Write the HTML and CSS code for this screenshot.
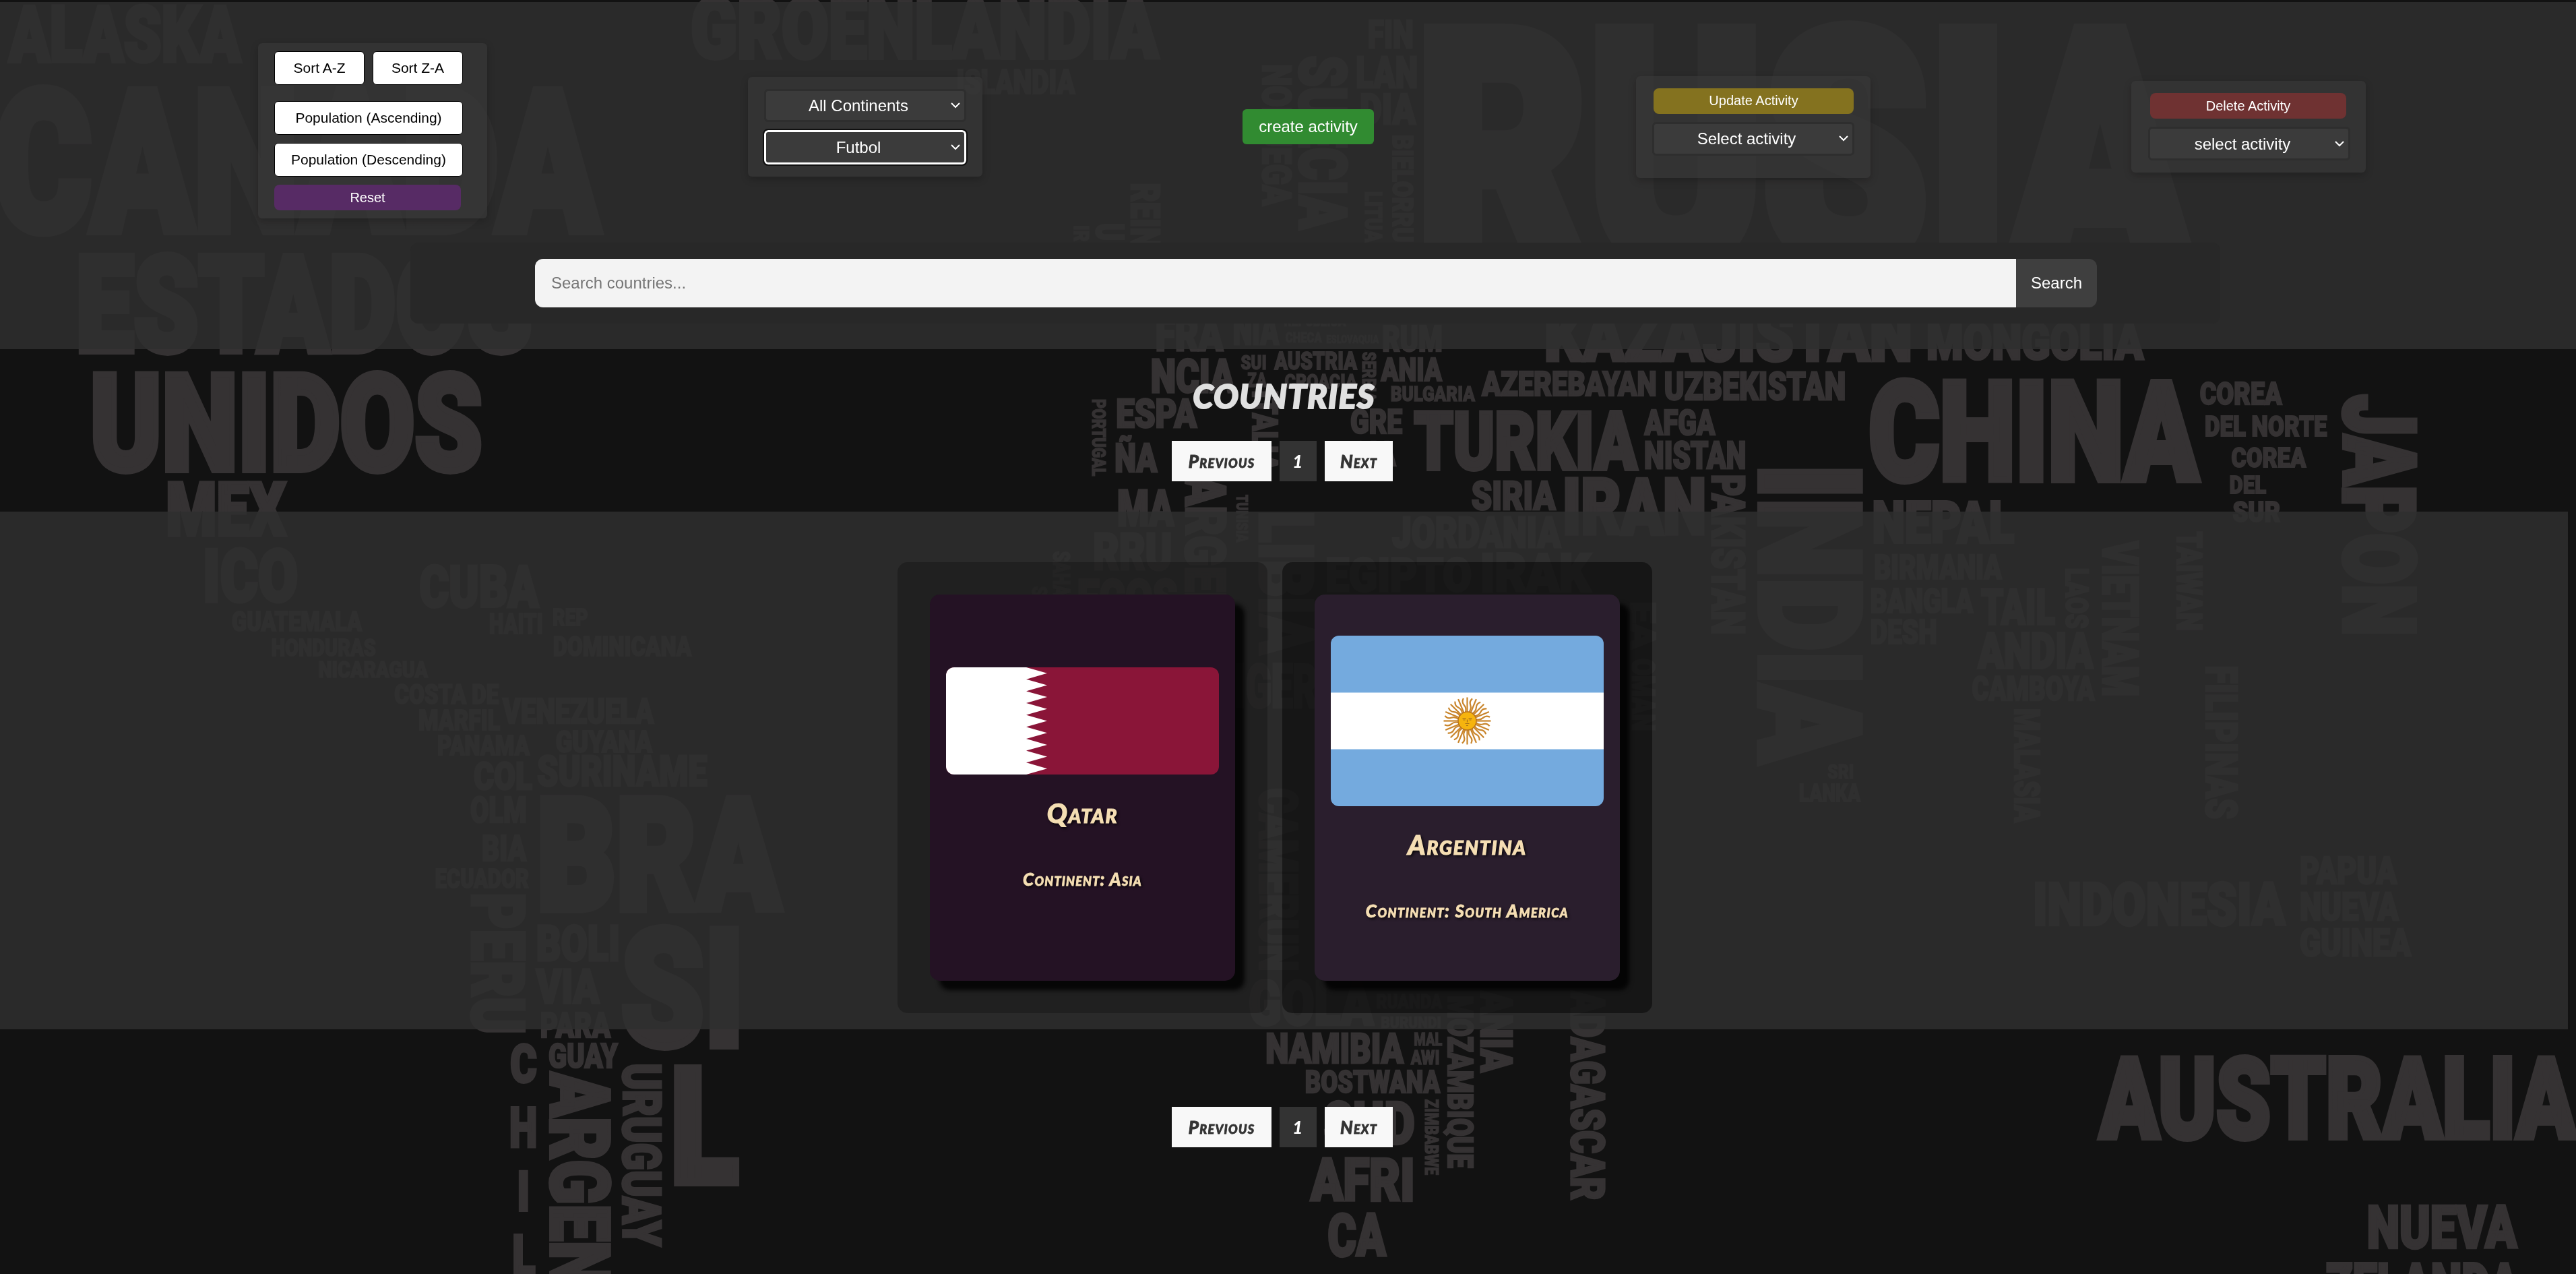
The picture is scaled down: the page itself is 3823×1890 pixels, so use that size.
FILE: index.html
```
<!DOCTYPE html>
<html lang="en">
<head>
<meta charset="utf-8">
<title>Countries</title>
<link rel="stylesheet" href="styles.css">
</head>
<body>
<svg class="world" viewBox="0 0 1568 775.2" preserveAspectRatio="none" aria-hidden="true"></svg>

<header class="header">
  <nav class="controls">
    <div class="panel panel-sort">
      <div class="sort-row">
        <button class="btn-white">Sort A-Z</button>
        <button class="btn-white">Sort Z-A</button>
      </div>
      <button class="btn-white">Population (Ascending)</button>
      <button class="btn-white">Population (Descending)</button>
      <button class="btn-color btn-reset">Reset</button>
    </div>
    <div class="panel panel-filter">
      <select class="select"><option>All Continents</option></select>
      <select class="select select-active"><option>Futbol</option></select>
    </div>
    <button class="btn-create">create activity</button>
    <div class="panel panel-update">
      <button class="btn-color btn-update">Update Activity</button>
      <select class="select"><option>Select activity</option></select>
    </div>
    <div class="panel panel-delete">
      <button class="btn-color btn-delete">Delete Activity</button>
      <select class="select"><option>select activity</option></select>
    </div>
  </nav>
  <form class="search">
    <input class="search-input" type="text" placeholder="Search countries...">
    <button class="search-btn" type="button">Search</button>
  </form>
</header>

<main>
  <div class="intro">
    <h1 class="title">COUNTRIES</h1>
    <div class="pagination">
      <button class="page-btn page-prev">Previous</button>
      <span class="page-now">1</span>
      <button class="page-btn page-next">Next</button>
    </div>
  </div>

  <section class="cards">
    <div class="slot slot-first">
      <article class="card card-qatar">
        <svg class="flag" width="405" height="169" viewBox="0 0 405 169" preserveAspectRatio="none">
          <rect width="405" height="169" fill="#8a1538"/>
          <path fill="#fff" d="M0 0H119L150 9.4 119 18.8 150 28.2 119 37.6 150 46.9 119 56.3 150 65.7 119 75.1 150 84.5 119 93.9 150 103.3 119 112.7 150 122.1 119 131.4 150 140.8 119 150.2 150 159.6 119 169H0Z"/>
        </svg>
        <h2 class="name">Qatar</h2>
        <h3 class="continent">Continent: Asia</h3>
      </article>
    </div>
    <div class="slot slot-second">
      <article class="card card-argentina">
        <svg class="flag" width="405" height="253" viewBox="0 0 405 253">
          <rect width="405" height="253" fill="#74aade"/>
          <rect y="84.500" width="405" height="84" fill="#fff"/>
          <g transform="translate(202.5 126.5)">
            <g id="rays" stroke="#c9852b" stroke-width="2.200" fill="none"></g>
            <circle r="13.500" fill="#f6b40e" stroke="#b8731a" stroke-width="1.500"/>
            <path d="M-7 -3q3-2 5 0M2 -3q3-2 5 0M-6 -1.500h3M3 -1.500h3M0 -2v4M-3 4h6M-1.500 7h3" fill="none" stroke="#a5701a" stroke-width="1.200"/>
          </g>
        </svg>
        <h2 class="name">Argentina</h2>
        <h3 class="continent continent-long">Continent: South America</h3>
      </article>
    </div>
  </section>

  <div class="pagination pagination-bottom">
    <button class="page-btn page-prev">Previous</button>
    <span class="page-now">1</span>
    <button class="page-btn page-next">Next</button>
  </div>
</main>
<script src="script.js"></script>
</body>
</html>
```
FILE: styles.css
```
* { box-sizing: border-box; }
html { background: #121212; }
body {
  margin: 0;
  padding-top: 3px;
  height: 1890px;
  overflow: hidden;
  font-family: "Liberation Sans", Arial, sans-serif;
}
button, input, select { font-family: inherit; margin: 0; }

.world {
  position: fixed;
  inset: 0;
  width: 100%;
  height: 100%;
  z-index: -1;
}
.world text {
  font-family: Roboto, sans-serif;
  font-weight: 900;
  fill: #353233;
  stroke: #353233;
}

.header {
  height: 515px;
  background: rgba(46, 46, 46, 0.86);
}
.controls {
  display: flex;
  align-items: center;
  gap: 387px;
  height: 357px;
  padding: 13px 0 0 383px;
}
.panel {
  display: flex;
  flex-direction: column;
  flex: none;
  align-items: flex-start;
  background: rgba(60, 60, 60, 0.5);
  border-radius: 6px;
  box-shadow: 0 4px 12px rgba(0, 0, 0, 0.22);
}
.panel-sort { width: 340px; height: 260px; padding: 12px 24px; gap: 12px; margin-top: 12px; }
.panel-filter { width: 348px; height: 148px; padding: 18px 24px; gap: 12px; }
.panel-update { width: 348px; height: 151px; padding: 18px 24px; gap: 12px; }
.panel-delete { width: 348px; height: 136px; padding: 18px 25px; gap: 12px; }

.sort-row { display: flex; gap: 12px; margin-bottom: 12px; }
.btn-white {
  width: 280px;
  height: 50px;
  padding: 0;
  font-size: 21px;
  color: #000;
  background: #fff;
  border: 1px solid #000;
  border-radius: 6px;
}
.sort-row .btn-white { width: 134px; }
.btn-color {
  height: 38px;
  padding: 0;
  border: 0;
  border-radius: 8px;
  font-size: 20px;
  color: #fff;
}
.btn-reset { width: 277px; background: rgba(94, 42, 111, 0.85); }
.btn-update { width: 297px; margin-left: 2px; background: rgba(145, 125, 28, 0.86); }
.btn-delete { width: 291px; margin-left: 3px; background: rgba(120, 50, 50, 0.88); }
.select {
  appearance: none;
  width: 300px;
  height: 50px;
  padding: 0 20px 0 0;
  font-size: 24px;
  color: #fff;
  text-align: center;
  text-align-last: center;
  background: #3b3b3b url("data:image/svg+xml,%3Csvg xmlns='http://www.w3.org/2000/svg' width='14' height='9' viewBox='0 0 14 9'%3E%3Cpath d='M1 1l6 6 6-6' fill='none' stroke='white' stroke-width='2'/%3E%3C/svg%3E") no-repeat right 6px center;
  border: 3px solid #2e2e2e;
  border-radius: 6px;
}
.select-active {
  border-color: #fff;
  outline: 2px solid #101010;
  height: 52px;
}
.btn-create {
  flex: none;
  width: 195px;
  height: 52px;
  margin: 0 2px 0 -1px;
  padding: 0;
  border: 0;
  border-radius: 6px;
  font-size: 24px;
  color: #fff;
  background: rgba(50, 150, 50, 0.9);
}

.search {
  display: flex;
  width: 2686px;
  height: 120px;
  margin: 0 0 0 609px;
  padding: 24px 183px 24px 185px;
  background: #282828;
  border-radius: 12px;
}
.search-input {
  flex: 1;
  height: 72px;
  padding: 0 24px;
  border: 0;
  font-size: 24px;
  background: #f3f3f3;
  border-radius: 12px 0 0 12px;
}
.search-input::placeholder { color: #757575; }
.search-btn {
  width: 120px;
  height: 72px;
  padding: 0;
  border: 0;
  font-size: 24px;
  color: #fff;
  background: #3f3f3f;
  border-radius: 0 12px 12px 0;
}

.intro { height: 241px; padding-top: 38px; }
.title {
  margin: 0;
  height: 98px;
  padding-right: 12px;
  text-align: center;
  font: italic 900 49px/62px Lato, sans-serif;
  letter-spacing: 1.3px;
  color: #e0e0e0;
  -webkit-text-stroke: 2px #e0e0e0;
}
.pagination {
  display: flex;
  gap: 12px;
  padding-left: 1739px;
  font: italic 900 26px/60px Lato, sans-serif;
  font-variant: small-caps;
  letter-spacing: 1.3px;
}
.pagination-bottom { margin-top: 115px; }
.page-btn {
  height: 60px;
  padding: 0;
  border: 0;
  font: inherit;
  letter-spacing: inherit;
  color: #333;
  background: #f8f8f8;
  -webkit-text-stroke: 0.8px #333;
}
.page-prev { width: 148px; }
.page-next { width: 101px; }
.page-now {
  width: 55px;
  text-align: center;
  color: #fff;
  background: #333;
}

.cards {
  display: flex;
  gap: 22px;
  width: 3811px;
  height: 768px;
  padding: 75px 0 0 1332px;
  background: rgba(46, 46, 46, 0.86);
}
.slot {
  width: 549px;
  height: 669px;
  padding: 48px;
  border-radius: 15px;
}
.slot-first { background: rgba(0, 0, 0, 0.24); }
.slot-second { background: rgba(0, 0, 0, 0.46); }
.card {
  display: flex;
  flex-direction: column;
  align-items: center;
  width: 453px;
  height: 573px;
  border-radius: 15px;
  box-shadow: 14px 14px 6px rgba(0, 0, 0, 0.8);
  color: #f5deb3;
  text-shadow: 2px 2px 4px #000;
}
.card-qatar { padding-top: 108px; background: #241224; }
.card-argentina { padding-top: 61px; background: #2a1e2d; }
.card-qatar .flag { height: 159px; }
.flag { display: block; flex: none; border-radius: 12px; }
.name {
  margin: 33px 0 0;
  font: italic 900 40px/48px Lato, sans-serif;
  font-variant: small-caps;
  letter-spacing: 1.9px;
  -webkit-text-stroke: 1.2px #f5deb3;
}
.continent {
  margin: 56px 0 0;
  font: italic 900 26px/36px Lato, sans-serif;
  font-variant: small-caps;
  letter-spacing: 1.2px;
  -webkit-text-stroke: 0.8px #f5deb3;
}
.continent-long { letter-spacing: 1.5px; }
```
FILE: script.js
```
// Word map: [text, left, top, right, bottom] for horizontal words.
var across = [
["ALASKA",5.4,2.4,146.5,38.4],["CANADA",-4,52.5,364.5,143.1],["ESTADOS",46,154,324,215.7],
["UNIDOS",54.8,226,293.6,287.7],["MEX",101,292.8,174,326.7],["ICO",123.4,333.3,181.4,367],
["GUATEMALA",141.1,371.5,220.3,384.4],["HONDURAS",165.2,388.3,228.8,399.5],["NICARAGUA",193.8,402.2,260.4,412.7],
["COSTA DE",240,415.7,303.6,428.6],["MARFIL",254.7,431.6,304.3,444.6],["PANAMA",266.2,447,322.3,459.9],
["COL",288.3,463.2,324,480.7],["OLM",286.3,484.6,320.6,501.1],["BIA",293.4,507.7,320.3,524.3],
["ECUADOR",264.9,528.5,322,540.5],["CUBA",255.3,343.5,327.8,370],["HAITI",297.8,372.7,330.5,385.9],
["REP",336.3,369.7,358,380.8],["DOMINICANA",336.6,386.8,420.9,399.5],["VENEZUELA",306,424.7,398,440.7],
["GUYANA",338.3,444,397,458.1],["SURINAME",327,459.3,430.4,478.9],["BRA",326.5,483.7,475,555.6],
["BOLI",326.4,563,377.4,585.4],["VIA",326.4,588.7,364.8,610.9],["SI",378,563.4,453,638.6],
["L",408,647.6,449.5,721.9],["PARA",328.8,615.7,371.6,631.7],["GUAY",333.9,634.7,376,650.3],
["C",310.6,635,326.8,659],["H",310.1,672.9,327,698.5],["I",314.7,711.7,322.5,737.3],["L",311.8,750.5,325.8,776],
["GROENLANDIA",420.4,-2,705,36.6],["ISLANDIA",582.2,42,654.3,57.5],["FIN",832.5,12,860.4,29.8],
["LAN",825.3,33.8,863,53.9],["DIA",827.7,56.7,861.7,76.3],["RUSIA",862,14.3,1333,165],
["FRA",703.3,192.8,744.4,213.9],["NIA",750.5,190,778.4,210.3],["REPUBLICA",781.5,192,819.2,198.8],
["CHECA",782.5,202.4,804.6,208.5],["ESLOVAQUIA",807.3,203.8,839.3,208.9],["RUM",841.3,197.8,878,214.3],
["NCIA",700.4,218,751.6,239.2],["SUI",755.3,215.9,771,225.2],["ZA",759.4,226.6,771,235.8],
["AUSTRIA",775.7,213.5,826,225.2],["CROACIA",782,227.6,826,236.6],["ANIA",840.6,217.3,877.7,232.4],
["BULGARIA",846.4,234.6,897.8,244.3],["GRE",821.9,248.9,853.6,264.4],["CIA",823,268.5,849.6,284],
["ESPA",679.3,242,728.4,260.6],["ÑA",678.5,269,704.3,287.7],["MA",680,297.6,714.5,320.6],
["RRU",665.3,324,713.4,347.5],["ECOS",655.6,352,716.8,376],["JORDANIA",847.4,314,950,333.9],
["EGIPTO",806.9,339.2,895.8,360.5],["IRAK",901,336.2,968,360.5],["IRAN",951,290.2,1038.6,325.8],
["KAZAJISTAN",940,188,1164,220.3],["MONGOLIA",1172.6,196,1304.7,219.3],["AZEREBAYAN",902,225.6,1008.4,241.3],
["UZBEKISTAN",1013,226,1123.5,243.7],["CHINA",1137.4,230.2,1338,294],["COREA",1339,232.2,1389,246.7],
["DEL NORTE",1342,252.7,1416.4,265.8],["COREA",1358.2,271.8,1403.6,284.7],["DEL",1357,289,1379.4,300.6],
["SUR",1359,304.5,1388,318],["TURKIA",860.7,249.5,996.5,286.5],["AFGA",1001,249,1044,265],
["NISTAN",1000.8,268,1062.8,285.5],["SIRIA",895.7,292.2,946.9,310.5],["NEPAL",1139.6,304.2,1226,331],
["BIRMANIA",1140.7,337.2,1218.5,352.8],["BANGLA",1138.5,358,1201,373.3],["DESH",1138.5,376.9,1179,392.2],
["TAIL",1205.9,358.2,1250.9,380.5],["ANDIA",1204,385,1274,407.3],["CAMBOYA",1200.3,411.2,1275,426.5],
["SRI",1112.4,465,1128.4,474],["LANKA",1095,476.8,1132.5,488.2],["INDONESIA",1237.4,536.3,1390.8,563.7],
["PAPUA",1399.8,521,1459,538.4],["NUEVA",1399.8,542.6,1460,560.4],["GUINEA",1399.8,564.6,1467.5,582],
["AUSTRALIA",1278,642.2,1568,694.2],["NUEVA",1440.7,732.7,1532,760],["ZELANDA",1415.8,768,1533.4,796],
["NIGER",735,403,802,431],["GOLA",760,596.4,836,624.5],["RUANDA",837.7,605,877.9,614],
["BURUNDI",840.5,618,877.2,625.6],["NAMIBIA",770.4,628.6,854.3,647.5],["MAL",860.6,628,877.9,636.3],
["AWI",858.7,638.6,876.3,648],["BOSTWANA",794.4,650.8,876.6,665.2],["SUD",805.7,670,861.2,696.9],
["AFRI",797.8,704,861.2,731.2],["CA",808.2,738,843.6,764.9]
];
// Words that read downwards, same box order.
var down = [
["PERU",286.3,543.2,319.6,629.3],["ARGEN",334.2,652.7,371.6,783],["URUGUAY",378.4,647,402.6,758.3],
["NORUEGA",768.2,39.2,786.6,125.2],["SUECIA",790.3,33.8,820.2,139.6],["BIELORRU",847.4,81.9,860.4,147.5],
["LITUA",830.8,116.5,842,147.5],["REIN",688,111.3,706.3,151],["U",666.6,135.8,684.6,146.5],["IR",653.6,137,663.2,147],
["SERBIA",829,214,837.9,244.5],["SAHA",640.9,335.3,651.9,363],["S",628,356.6,637.7,363],["PORTUGAL",664.5,242.7,673.4,289.7],
["ITALIA",761.8,237.5,778,287],["ARGEL",720.9,289,746.4,375],["TUNISIA",752.3,301,760,330],
["LIBIA",765.8,311,799.7,398],["PAKISTAN",1041.5,288.7,1062.3,386.2],["INDIA",1069.5,282.5,1134,464],
["JAPON",1425.3,240,1471,387],["LAOS",1257.2,345.6,1271.7,382.6],["VIETNAM",1279.2,329.4,1301.9,423.8],
["TAIWAN",1324.6,323.4,1341,383.8],["MALASIA",1226,431,1242.3,500.5],["FILIPINAS",1342,404.9,1362.2,498.4],
["EA",992,366,1008,395],["OMAN",993,400.7,1008.2,444.9],["CAMERUN",766,479.6,790,591],
["ZIMBABWE",867.2,668.8,875.7,715],["MOZAMBIQUE",880.7,605.8,896.7,710.8],["ANIA",901,603,921.5,652.5],
["ADAGASCAR",955.7,603,977,730.3]
];
var NS = "http://www.w3.org/2000/svg";
var CAP = 0.711;
var world = document.querySelector(".world");

// The outline thickens the letters, so the glyphs shrink by its width.
function word(text, x, y, length, cap, turned) {
  var line = cap * 0.065;
  var t = document.createElementNS(NS, "text");
  if (turned) { x += line / 2; } else { y -= line / 2; }
  t.setAttribute("transform", "translate(" + x + " " + y + ")" + (turned ? " rotate(90)" : ""));
  t.setAttribute("font-size", ((cap - line) / CAP).toFixed(2));
  t.setAttribute("stroke-width", line.toFixed(2));
  t.setAttribute("textLength", length.toFixed(2));
  t.setAttribute("lengthAdjust", "spacingAndGlyphs");
  t.textContent = text;
  world.appendChild(t);
}
across.forEach(function (w) { word(w[0], w[1], w[4], w[3] - w[1], w[4] - w[2], false); });
down.forEach(function (w) { word(w[0], w[1], w[2], w[4] - w[2], w[3] - w[1], true); });

// Sun rays: straight and wavy ones alternate.
var rays = document.getElementById("rays");
for (var i = 0; i < 32; i++) {
  var p = document.createElementNS(NS, "path");
  p.setAttribute("d", i % 2 ? "M0 -13Q3 -19 0 -24T1 -34" : "M0 -13V-35");
  p.setAttribute("transform", "rotate(" + i * 11.25 + ")");
  rays.appendChild(p);
}
```
